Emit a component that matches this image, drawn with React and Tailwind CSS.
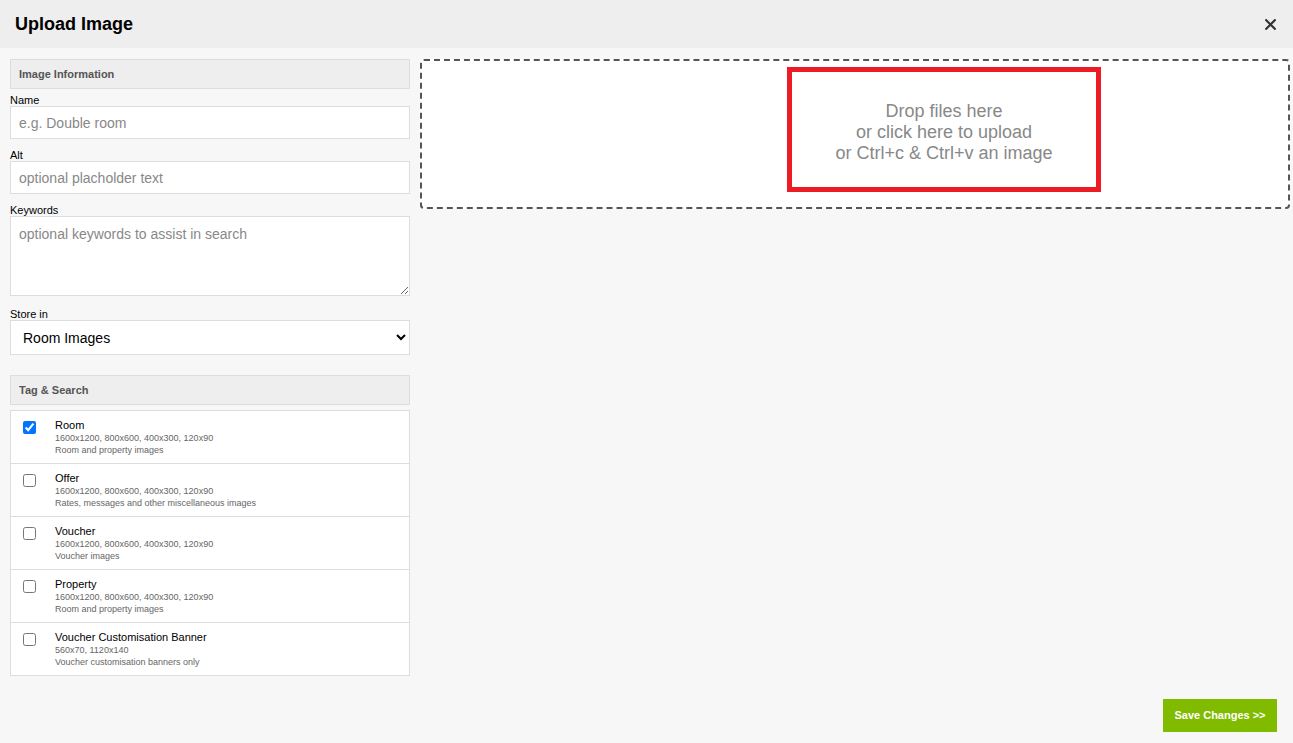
import { useState } from 'react';

const tags = [
    { name: 'Room', sizes: '1600x1200, 800x600, 400x300, 120x90', desc: 'Room and property images', checked: true },
    { name: 'Offer', sizes: '1600x1200, 800x600, 400x300, 120x90', desc: 'Rates, messages and other miscellaneous images' },
    { name: 'Voucher', sizes: '1600x1200, 800x600, 400x300, 120x90', desc: 'Voucher images' },
    { name: 'Property', sizes: '1600x1200, 800x600, 400x300, 120x90', desc: 'Room and property images' },
    { name: 'Voucher Customisation Banner', sizes: '560x70, 1120x140', desc: 'Voucher customisation banners only' },
];

const SectionHead = ({ children, className = '' }) => (
    <div className={`h-[30px] flex items-center px-[8px] bg-[#eeeeee] border border-[#dddddd] text-[11px] font-bold text-[#555555] ${className}`}>
        {children}
    </div>
);

const Label = ({ children, className = '' }) => (
    <label className={`block text-[11px] leading-[12px] text-black ${className}`}>{children}</label>
);

const App = () => {
    const [checked, setChecked] = useState(tags.map((t) => !!t.checked));

    return (
        <div className="min-h-screen flex flex-col bg-[#f7f7f7] font-['Liberation_Sans',Arial,sans-serif] text-black">
            {/* Header */}
            <header className="h-12 flex items-center justify-between pl-[15px] pr-[17px] bg-[#eeeeee]">
                <h1 className="text-[18px] font-bold">Upload Image</h1>
                <button className="text-[#333333]">
                    <svg width="11" height="11" viewBox="0 0 11 11">
                        <path d="M1.2 1.2 L9.8 9.8 M9.8 1.2 L1.2 9.8" stroke="currentColor" strokeWidth="2.2" strokeLinecap="square" />
                    </svg>
                </button>
            </header>

            <div className="flex-1 flex gap-[10px] pt-[11px] pl-[10px] pr-[3px]">
                {/* Left column */}
                <div className="w-[400px] shrink-0">
                    <SectionHead>Image Information</SectionHead>

                    <Label className="mt-[5px]">Name</Label>
                    <input
                        placeholder="e.g. Double room"
                        className="block w-full h-[33px] px-[8px] bg-white border border-[#dddddd] text-[14px] placeholder:text-[#888888] outline-none"
                    />

                    <Label className="mt-[10px]">Alt</Label>
                    <input
                        placeholder="optional placholder text"
                        className="block w-full h-[33px] px-[8px] bg-white border border-[#dddddd] text-[14px] placeholder:text-[#888888] outline-none"
                    />

                    <Label className="mt-[10px]">Keywords</Label>
                    <textarea
                        placeholder="optional keywords to assist in search"
                        className="block w-full h-[80px] px-[8px] pt-[8px] bg-white border border-[#dddddd] text-[14px] leading-[18px] placeholder:text-[#888888] outline-none"
                    />

                    <Label className="mt-[12px]">Store in</Label>
                    <select className="block w-full h-[35px] pl-[8px] pr-[2px] bg-white border border-[#dddddd] text-[14px] outline-none">
                        <option>Room Images</option>
                        <option>Offer Images</option>
                        <option>Voucher Images</option>
                    </select>

                    <SectionHead className="mt-[20px]">Tag &amp; Search</SectionHead>

                    <div className="mt-[5px] bg-white border border-[#dddddd]">
                        {tags.map((t, i) => (
                            <div key={t.name} className={`flex ${i > 0 ? 'h-[53px] border-t border-[#dddddd]' : 'h-[52px]'}`}>
                                <div className="w-[44px] pl-[12px] pt-[10px] shrink-0">
                                    <input
                                        type="checkbox"
                                        checked={checked[i]}
                                        onChange={() => setChecked(checked.map((c, j) => (j === i ? !c : c)))}
                                        className="block w-[13px] h-[13px] m-0 accent-[#0075ff]"
                                    />
                                </div>
                                <div className="pt-[8px]">
                                    <div className="text-[11px] leading-[13px] text-black">{t.name}</div>
                                    <div className="text-[9px] leading-[12px] text-[#666666]">{t.sizes}</div>
                                    <div className="text-[9px] leading-[12px] text-[#666666]">{t.desc}</div>
                                </div>
                            </div>
                        ))}
                    </div>
                </div>

                {/* Drop zone */}
                <div className="flex-1">
                    <div className="h-[150px] border-2 border-dashed border-[#555555] rounded-[4px] bg-white pl-[365px] pt-[6px] cursor-pointer">
                        <div className="w-[314px] h-[125px] pt-[6px] border-[5px] border-[#ed1c24] flex flex-col items-center justify-center text-[18px] leading-[21px] text-[#888888]">
                            <span>Drop files here</span>
                            <span>or click here to upload</span>
                            <span>or Ctrl+c &amp; Ctrl+v an image</span>
                        </div>
                    </div>
                </div>
            </div>

            {/* Footer */}
            <div className="flex justify-end pr-[16px] pb-[11px]">
                <button className="w-[114px] h-[33px] bg-[#80bb00] text-white text-[11px] font-bold">
                    Save Changes &gt;&gt;
                </button>
            </div>
        </div>
    );
};

export default App;
